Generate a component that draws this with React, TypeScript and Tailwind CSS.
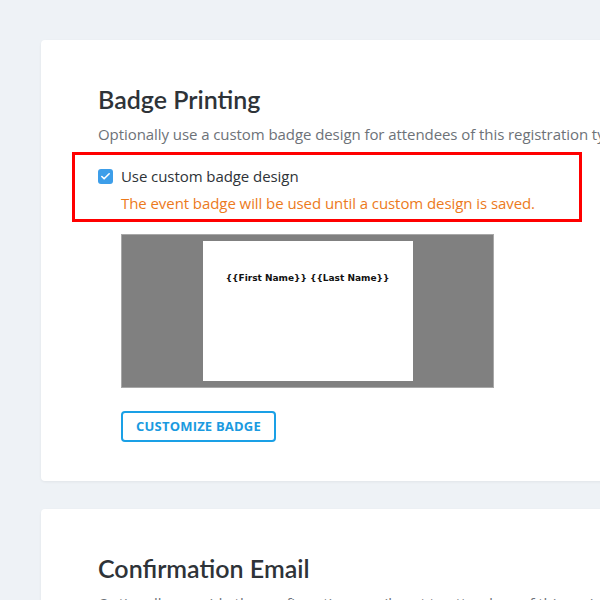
import { Check } from "lucide-react";

const heading = "font-['Lato','Open_Sans',sans-serif]";
const body = "font-['Open_Sans','Noto_Sans',sans-serif] tracking-[-0.07px]";

function BadgePreview() {
  return (
    <div className="ml-[23px] mt-3 flex h-[154px] w-[373px] justify-center border border-[#a8a8a8] bg-[#808080] pt-[6px]">
      <div className="h-[140px] w-[210px] bg-white pt-[31px] text-center font-['DejaVu_Sans','Verdana',sans-serif] text-[9px] font-bold tracking-normal text-[#111]">
        {"{{First Name}} {{Last Name}}"}
      </div>
    </div>
  );
}

export default function App() {
  return (
    <div className={`h-[600px] w-[600px] overflow-hidden bg-[#eef2f6] pt-10 ${body}`}>
      <div className="ml-[41px] w-[620px] rounded-[4px] bg-white pb-[39px] pl-[57px] pt-[43px] shadow-[0_1px_3px_rgba(0,0,0,0.06)]">
        <h2 className={`${heading} text-[25px] leading-8 font-semibold tracking-normal text-[#2e3338]`}>
          Badge Printing
        </h2>
        <p className="mt-2 whitespace-nowrap text-[15px] leading-[22px] text-[#6d7278]">
          Optionally use a custom badge design for attendees of this registration type.
        </p>

        <div className="ml-[-26px] mt-[7px] w-[510px] border-[3px] border-[#ff0000] pb-[5px] pl-[23px] pt-[10px]">
          <label className="flex items-center gap-2 text-[15px] leading-[22px] text-[#2e3338]">
            <span className="flex h-[15px] w-[15px] items-center justify-center rounded-[3px] bg-[#3d9ee9]">
              <Check className="h-[11px] w-[11px] text-white" strokeWidth={3.5} />
            </span>
            Use custom badge design
          </label>
          <p className="ml-[23px] mt-[5px] text-[15px] leading-[22px] text-[#ec7a1c]">
            The event badge will be used until a custom design is saved.
          </p>
        </div>

        <BadgePreview />

        <button className="ml-[23px] mt-[23px] h-[31px] w-[155px] rounded-[4px] border-2 border-[#1aa0e6] text-[13px] font-bold tracking-[0.2px] text-[#1a9ae0]">
          CUSTOMIZE BADGE
        </button>
      </div>

      <div className="ml-[41px] mt-7 w-[620px] rounded-[4px] bg-white pl-[57px] pt-[43px] shadow-[0_1px_3px_rgba(0,0,0,0.06)]">
        <h2 className={`${heading} text-[25px] leading-8 font-semibold tracking-normal text-[#2e3338]`}>
          Confirmation Email
        </h2>
        <p className="mt-2 whitespace-nowrap text-[15px] leading-[22px] text-[#6d7278]">
          Optionally override the confirmation email sent to attendees of this registration type.
        </p>
      </div>
    </div>
  );
}
